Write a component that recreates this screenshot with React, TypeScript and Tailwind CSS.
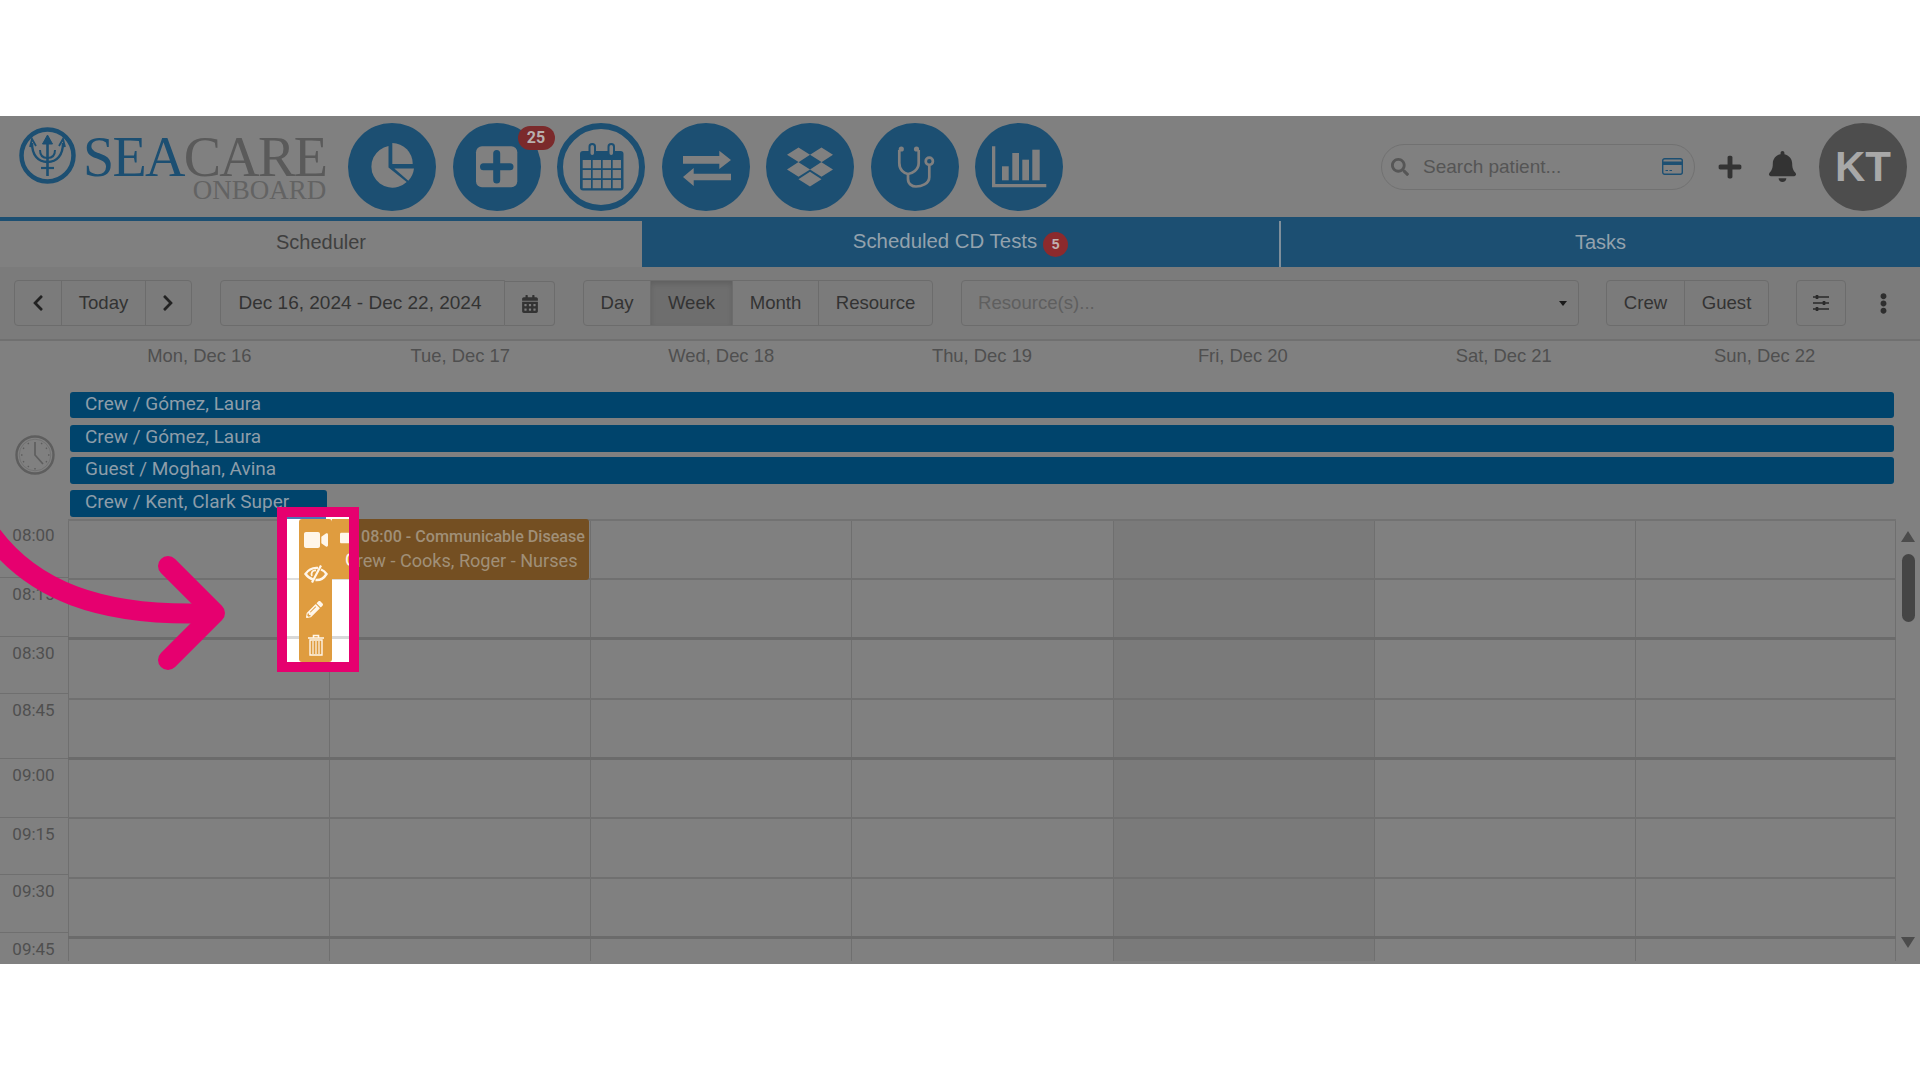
import { FaBell, FaCalendarAlt, FaChevronLeft, FaChevronRight, FaDropbox, FaEllipsisV, FaPencilAlt, FaPlus, FaSearch, FaVideo } from "react-icons/fa";
import type { ReactNode } from "react";

const days = ["Mon, Dec 16", "Tue, Dec 17", "Wed, Dec 18", "Thu, Dec 19", "Fri, Dec 20", "Sat, Dec 21", "Sun, Dec 22"];

const times = [
  { label: "08:00", h: "h-[59px]" },
  { label: "08:15", h: "h-[59px]" },
  { label: "08:30", h: "h-[57px]" },
  { label: "08:45", h: "h-[65px]" },
  { label: "09:00", h: "h-[59px]" },
  { label: "09:15", h: "h-[57px]" },
  { label: "09:30", h: "h-[58px]" },
  { label: "09:45", h: "h-[26px]" },
];

const rows = [
  { h: "h-[59px]", line: "border-b-2 border-[#707070]" },
  { h: "h-[60px]", line: "border-b-[3px] border-[#6b6b6b]" },
  { h: "h-[60px]", line: "border-b-2 border-[#707070]" },
  { h: "h-[60px]", line: "border-b-[3px] border-[#6b6b6b]" },
  { h: "h-[59px]", line: "border-b-2 border-[#707070]" },
  { h: "h-[60px]", line: "border-b-2 border-[#707070]" },
  { h: "h-[60px]", line: "border-b-[3px] border-[#6b6b6b]" },
  { h: "h-[22px]", line: "" },
];

function Circle({ children, ring }: { children: ReactNode; ring?: boolean }) {
  return (
    <div className={`h-[88px] w-[88px] shrink-0 rounded-full ${ring ? "border-[6px] border-[#1c4f72]" : "bg-[#1c4f72]"} relative`}>
      {children}
    </div>
  );
}

function Logo() {
  return (
    <div className="flex h-full w-[348px] shrink-0 items-start pl-[19px] pt-[11px]">
      <svg width="57" height="57" viewBox="0 0 57 57" fill="none" stroke="#1c4f72" className="shrink-0">
        <circle cx="28.5" cy="28.5" r="26" strokeWidth="4.5" />
        <path d="M28.5 13V49" strokeWidth="2.6" />
        <path d="M28.5 8L23.5 17H33.5Z" fill="#1c4f72" strokeWidth="1" />
        <path d="M13 16C13 28 19 35 28.5 35C38 35 44 28 44 16" strokeWidth="2.4" />
        <path d="M11 20L13 12L17 19M40 19L44 12L46 20" strokeWidth="1.8" />
        <path d="M21 23C21 29 24 31 28.5 31C33 31 36 29 36 23" strokeWidth="2" />
        <path d="M22 41H35" strokeWidth="2.2" />
      </svg>
      <div className="ml-[7px] flex flex-col items-end font-['Liberation_Serif',serif] leading-none">
        <div className="mt-[8px] h-[44px] whitespace-nowrap text-[56px] leading-[44px] tracking-[-1.7px]">
          <span className="text-[#1c4f72]">SEA</span>
          <span className="text-[#5a5a5a]">CARE</span>
        </div>
        <div className="mt-[-1px] text-[27px] leading-[24px] text-[#636363]">ONBOARD</div>
      </div>
    </div>
  );
}

function NavIcons() {
  const g = "#808080";
  const b = "#1c4f72";
  return (
    <div className="flex items-center gap-[16.5px]">
      <Circle>
        <svg viewBox="0 0 88 88" className="h-full w-full" fill={g}>
          <path d="M40.5 23A21 21 0 1 0 58.7 59L40.5 44.5Z" />
          <path d="M46.3 45.5H66A21 21 0 0 1 60.3 57.7Z" />
          <path d="M44.3 20A20.7 20.7 0 0 1 64.7 41H44.3Z" />
        </svg>
      </Circle>
      <Circle>
        <svg viewBox="0 0 88 88" className="h-full w-full">
          <rect x="23" y="23.3" width="41.3" height="41" rx="6" fill={g} />
          <path d="M43.7 30.5V57M30.5 43.7H57" stroke={b} strokeWidth="7" strokeLinecap="round" />
        </svg>
        <span className="absolute left-[65px] top-[3px] flex h-[24px] w-[37px] items-center justify-center rounded-full bg-[#7b2a2b] font-['Roboto',sans-serif] text-[16px] font-bold text-[#b8b0ae]">
          25
        </span>
      </Circle>
      <Circle ring>
        <svg viewBox="0 0 88 88" className="absolute left-[-6px] top-[-6px] h-[88px] w-[88px]">
          <rect x="23" y="28" width="43.5" height="39.5" rx="3" fill={b} />
          {[25.7, 35.7, 45.7, 55.7].map((x) =>
            [37, 47, 57].map((y) => <rect key={`${x}-${y}`} x={x} y={y} width="8.3" height="8.2" fill={g} />),
          )}
          <rect x="32.5" y="21" width="5.5" height="12" rx="2.7" fill={g} stroke={b} strokeWidth="2" />
          <rect x="51.5" y="21" width="5.5" height="12" rx="2.7" fill={g} stroke={b} strokeWidth="2" />
        </svg>
      </Circle>
      <Circle>
        <svg viewBox="0 0 88 88" className="h-full w-full" fill={g}>
          <path d="M21 33H57.3V27.7L69 37L57.3 46V40.7H21Z" />
          <path d="M69 50.7H31.7V45L21 54L31.7 63V57.3H69Z" />
        </svg>
      </Circle>
      <Circle>
        <div className="flex h-full w-full items-center justify-center text-[#808080]">
          <FaDropbox size={46} />
        </div>
      </Circle>
      <Circle>
        <svg viewBox="0 0 88 88" className="h-full w-full" fill="none" stroke={g} strokeWidth="2.7">
          <path d="M28.3 27V40C28.3 47 33 50.5 37 51C41 50.5 47.7 47 47.7 40V27" />
          <path d="M37 51V56C37 61 41 63.5 45 63.5C50 63.5 58.3 61 58.3 54V43" />
          <circle cx="58.3" cy="38.3" r="3.6" />
          <circle cx="30.3" cy="26" r="2.6" fill={g} stroke="none" />
          <circle cx="45.5" cy="26" r="2.6" fill={g} stroke="none" />
        </svg>
      </Circle>
      <Circle>
        <svg viewBox="0 0 88 88" className="h-full w-full" fill={g}>
          <path d="M17 23.3H20.3V61H71.3V64.3H17Z" />
          <rect x="27" y="43.3" width="6.7" height="14" />
          <rect x="37.3" y="30" width="6.7" height="27.3" />
          <rect x="47.3" y="36.7" width="6.7" height="20.6" />
          <rect x="57.3" y="26.7" width="7.4" height="30.6" />
        </svg>
      </Circle>
    </div>
  );
}

function Header() {
  return (
    <div className="flex h-[101px] items-center">
      <Logo />
      <NavIcons />
      <div className="ml-auto flex items-center pr-[13px]">
        <div className="flex h-[46px] w-[314px] items-center rounded-full border border-[#717171] pl-[9px] pr-[11px]">
          <FaSearch size={18} className="text-[#565656]" />
          <span className="ml-[14px] pt-[2px] text-[19px] text-[#555555]">Search patient...</span>
          <svg viewBox="0 0 21 17" className="ml-auto h-[17px] w-[21px]" fill="none">
            <rect x="0.7" y="0.7" width="19.6" height="15.6" rx="2" stroke="#1c4f72" strokeWidth="1.4" />
            <rect x="1" y="3.5" width="19" height="3.5" fill="#1c4f72" />
            <path d="M3.5 12.5H6M7.5 12.5H10" stroke="#1c4f72" strokeWidth="1.2" />
          </svg>
        </div>
        <FaPlus size={26} className="ml-[22px] text-[#333333]" />
        <FaBell size={31} className="ml-[24px] text-[#333333]" />
        <div className="ml-[21px] flex h-[88px] w-[88px] items-center justify-center rounded-full bg-[#4d4d4d] text-[42px] font-bold text-[#a8a8a8]">
          KT
        </div>
      </div>
    </div>
  );
}

function Tabs() {
  return (
    <div className="flex h-[50px] border-t-4 border-[#1c4f72] text-[20px]">
      <div className="flex w-[642px] items-center justify-center pb-[5px] text-[#3f3f3f]">Scheduler</div>
      <div className="flex w-[639px] items-center justify-center gap-[6px] border-r-2 border-[#7f8f9b] bg-[#1c4f72] pb-[5px] text-[20.4px] text-[#93a2ad]">
        Scheduled CD Tests
        <span className="mt-[5px] flex h-[25px] w-[25px] items-center justify-center rounded-full bg-[#8c2a2d] text-[14px] font-bold text-[#c0b0b0]">5</span>
      </div>
      <div className="flex flex-1 items-center justify-center bg-[#1c4f72] pb-[5px] text-[#93a2ad]">Tasks</div>
    </div>
  );
}

function Btn({ className, children }: { className: string; children: ReactNode }) {
  return <div className={`flex items-center justify-center ${className}`}>{children}</div>;
}

function Toolbar() {
  return (
    <div className="flex h-[74px] items-center border-b-2 border-[#707070] bg-[#7b7b7b] pl-[14px] text-[18.6px] text-[#333333]">
      <div className="flex h-[46px] w-[178px] rounded-[4px] border border-[#6c6c6c]">
        <Btn className="w-[47px] border-r border-[#6c6c6c]"><FaChevronLeft size={18} className="text-[#222222]" /></Btn>
        <Btn className="w-[84px] border-r border-[#6c6c6c]">Today</Btn>
        <Btn className="flex-1"><FaChevronRight size={18} className="ml-[-2px] text-[#222222]" /></Btn>
      </div>
      <div className="ml-[28px] flex h-[46px] w-[335px]">
        <Btn className="w-[285px] rounded-l-[4px] border border-[#6c6c6c] pr-[5px] text-[19px]">Dec 16, 2024 - Dec 22, 2024</Btn>
        <Btn className="mt-px h-[45px] flex-1 rounded-r-[4px] border border-l-0 border-[#6c6c6c]"><FaCalendarAlt size={18} /></Btn>
      </div>
      <div className="ml-[28px] flex h-[46px] w-[350px] rounded-[4px] border border-[#6c6c6c]">
        <Btn className="w-[67px] border-r border-[#6c6c6c]">Day</Btn>
        <Btn className="w-[82px] border-r border-[#6c6c6c] bg-[#6e6e6e] shadow-[inset_0_3px_5px_rgba(0,0,0,0.125)]">Week</Btn>
        <Btn className="w-[86px] border-r border-[#6c6c6c]">Month</Btn>
        <Btn className="flex-1">Resource</Btn>
      </div>
      <div className="ml-[28px] flex h-[46px] w-[618px] items-center justify-between rounded-[4px] border border-[#6c6c6c] pl-[16px] pr-[11px] text-[#5f5f5f]">
        Resource(s)...
        <span className="h-0 w-0 border-x-[4px] border-t-[5px] border-x-transparent border-t-[#1a1a1a]" />
      </div>
      <div className="ml-[27px] flex h-[46px] w-[163px] rounded-[4px] border border-[#6c6c6c]">
        <Btn className="w-[78px] border-r border-[#6c6c6c]">Crew</Btn>
        <Btn className="flex-1">Guest</Btn>
      </div>
      <Btn className="ml-[27px] h-[46px] w-[50px] rounded-[4px] border border-[#6c6c6c]">
        <svg viewBox="0 0 18 18" className="h-[18px] w-[18px]" stroke="#2a2a2a" strokeWidth="1.4">
          <path d="M1 3H17M1 9H17M1 15H17" />
          <path d="M5 1V5M12 7V11M5 13V17" strokeWidth="2.6" />
        </svg>
      </Btn>
      <FaEllipsisV size={21} className="ml-[27px] text-[#2e2e2e]" />
    </div>
  );
}

function DayHeader() {
  return (
    <div className="flex h-[51px] pl-[69px] pr-[25px] pt-[3px] text-[18.4px] text-[#4f4f4f]">
      {days.map((d) => (
        <div key={d} className="flex h-[24px] flex-1 items-center justify-center">{d}</div>
      ))}
    </div>
  );
}

function Bar({ className, text }: { className: string; text: string }) {
  return (
    <div className={`flex items-center rounded-[3px] bg-[#00446c] pb-[2px] pl-[15px] font-['Roboto',sans-serif] text-[19px] text-[#8d9da9] ${className}`}>
      {text}
    </div>
  );
}

function AllDay() {
  return (
    <div className="flex h-[127px]">
      <div className="flex w-[70px] items-center justify-center pb-[2px]">
        <svg viewBox="0 0 40 40" className="h-[40px] w-[40px]" fill="none" stroke="#5e5e5e">
          <circle cx="20" cy="20" r="18.5" strokeWidth="2.4" />
          <circle cx="20" cy="20" r="15.8" strokeWidth="0.8" stroke="#6f6f6f" />
          <path d="M20 7V20L28 29" strokeWidth="1.7" />
          <path d="M20 33V34.5M6 20H7.5M33 20H34.5M13 8L13.7 9.2M27 8L26.3 9.2M8 13L9.2 13.7M32 13L30.8 13.7M8 27L9.2 26.3M32 27L30.8 26.3M13 32L13.7 30.8" strokeWidth="1.5" />
        </svg>
      </div>
      <div className="flex w-[1824px] flex-col">
        <Bar className="h-[26px]" text="Crew / Gómez, Laura" />
        <Bar className="mt-[7px] h-[27px]" text="Crew / Gómez, Laura" />
        <Bar className="mt-[5px] h-[27px]" text="Guest / Moghan, Avina" />
        <Bar className="mt-[6px] h-[27px] w-[257px]" text="Crew / Kent, Clark Super" />
      </div>
    </div>
  );
}

function Grid() {
  return (
    <div className="relative flex h-[440px] font-['Roboto',sans-serif]">
      <div className="w-[68px] shrink-0 text-[17px] text-[#4f4f4f]">
        {times.map((t) => (
          <div key={t.label} className={`${t.h} overflow-hidden border-b border-[#6f6f6f] pr-[1px] pt-[4px] text-center last:border-b-0`}>
            {t.label}
          </div>
        ))}
      </div>
      <div className="w-[1828px] border-t-2 border-[#727272]">
        {rows.map((r, i) => (
          <div key={i} className={`grid grid-cols-7 ${r.h} ${r.line}`}>
            {days.map((d, j) => (
              <div key={d} className={`border-l border-[#6f6f6f] last:border-r ${j === 4 ? "bg-[#7a7a7a]" : ""}`} />
            ))}
          </div>
        ))}
      </div>
      <div className="relative flex-1">
        <span className="absolute left-[5px] top-[12px] h-0 w-0 border-x-[7px] border-b-[11px] border-x-transparent border-b-[#4c4c4c]" />
        <div className="absolute left-[6px] top-[35px] h-[68px] w-[13px] rounded-full bg-[#454545]" />
        <span className="absolute left-[5px] top-[418px] h-0 w-0 border-x-[7px] border-t-[11px] border-x-transparent border-t-[#4c4c4c]" />
      </div>
      {/* dimmed part of the event */}
      <div className="absolute left-[332px] top-0 h-[61px] w-[257px] overflow-hidden rounded-[3px] bg-[#744f22] text-[#a08f78]">
        <div className="ml-[29px] mt-[7px] whitespace-nowrap text-[16.1px] font-medium leading-[22px]">08:00 - Communicable Disease</div>
        <div className="ml-[13px] mt-[1px] whitespace-nowrap text-[18.1px] leading-[24px]">Crew - Cooks, Roger - Nurses</div>
      </div>
    </div>
  );
}

function Spotlight() {
  return (
    <div className="absolute left-[277px] top-[507px] h-[165px] w-[82px] border-[10px] border-[#e6006f]">
      <div className="relative h-full w-full overflow-hidden bg-white font-['Roboto',sans-serif]">
        <div className="absolute left-0 top-0 h-[2px] w-[39px] bg-[#4a78b8]" />
        <div className="absolute left-0 top-[61px] h-[2px] w-full bg-[#dddddd]" />
        <div className="absolute left-0 top-[119px] h-[3px] w-full bg-[#d8d8d8]" />
        <div className="absolute left-[12px] top-[2px] flex h-[143px] w-[33px] flex-col items-center rounded-[3px] bg-[#df9c3f] text-[#fff6ea]">
          <FaVideo size={24} className="mt-[9px]" />
          <svg viewBox="0 0 24 18" className="mt-[13px] h-[18px] w-[24px]" fill="none" stroke="currentColor" strokeWidth="2.4">
            <path d="M9 14.5C5.5 13.5 3 11 1.5 9C4.5 4.5 9 2.5 14 3" />
            <path d="M17 4.5C19.5 5.5 21.5 7.5 22.5 9C20 13 16 15.5 11.5 15" />
            <path d="M8 11C6.5 8 8.5 5 12 5.5" strokeWidth="1.8" />
            <path d="M17 0.5L8 17.5" strokeWidth="2.2" />
          </svg>
          <FaPencilAlt size={17} className="ml-[-2px] mt-[18px]" />
          <svg viewBox="0 0 18 22" className="mt-[16px] h-[22px] w-[18px]" fill="none" stroke="currentColor">
            <path d="M1 4H17M6.5 3.5V1.5H11.5V3.5" strokeWidth="1.6" />
            <path d="M3 6H15V21H3Z" strokeWidth="1.4" />
            <path d="M6 7V20M9 7V20M12 7V20" strokeWidth="1.2" />
          </svg>
        </div>
        <div className="absolute left-[45px] top-[2px] h-[60px] w-[20px] bg-[#df9c3f] text-[#fff6ea]">
          <FaVideo size={16} className="ml-[8px] mt-[11px]" />
          <span className="absolute left-[13px] top-[29px] text-[18.1px] leading-[24px]">Crew</span>
        </div>
      </div>
    </div>
  );
}

function Arrow() {
  return (
    <svg className="absolute left-0 top-[500px] h-[200px] w-[260px]" viewBox="0 500 260 200" fill="none" stroke="#e6006f" strokeWidth="20" strokeLinecap="round" strokeLinejoin="round">
      <path d="M-12 530C30 590 100 618 214 613" />
      <path d="M168 566L215 613L168 660" />
    </svg>
  );
}

export default function App() {
  return (
    <div className="relative h-[1080px] w-[1920px] overflow-hidden bg-white font-['Liberation_Sans',sans-serif]">
      <div className="mt-[116px] inline-block h-[848px] w-full bg-[#808080] align-top">
        <Header />
        <Tabs />
        <Toolbar />
        <DayHeader />
        <AllDay />
        <Grid />
      </div>
      <Spotlight />
      <Arrow />
    </div>
  );
}
